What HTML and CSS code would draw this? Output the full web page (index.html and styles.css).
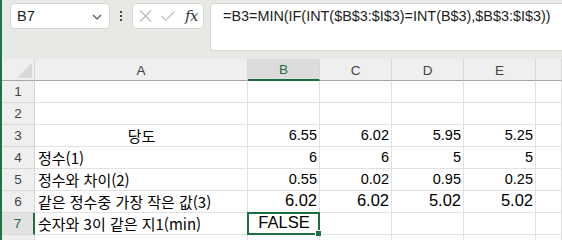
FILE: index.html
```html
<!DOCTYPE html>
<html lang="ko">
<head>
<meta charset="utf-8">
<link rel="stylesheet" href="styles.css">
</head>
<body>
<div class="app">
  <div class="topbar">
    <div class="namebox">
      <span class="name">B7</span>
      <svg class="chev" width="10" height="6" viewBox="0 0 10 6"><path d="M1 1 L5 5 L9 1" fill="none" stroke="#555" stroke-width="1.2"/></svg>
    </div>
    <div class="dots"><i></i><i></i><i></i></div>
    <div class="fxbox">
      <svg width="13" height="12" viewBox="0 0 13 12"><path d="M1 0.5 L12 11.5 M12 0.5 L1 11.5" stroke="#b8b8b8" stroke-width="1.1" fill="none"/></svg>
      <svg width="14" height="10" viewBox="0 0 14 10"><path d="M0.5 5 L4.8 9.3 L13.5 0.5" stroke="#b8b8b8" stroke-width="1.1" fill="none"/></svg>
      <span class="fx">fx</span>
    </div>
    <div class="formula">=B3=MIN(IF(INT($B$3:$I$3)=INT(B$3),$B$3:$I$3))</div>
  </div>
  <div class="sheet">
    <div class="hd corner"><span class="tri"></span></div>
    <div class="hd col">A</div>
    <div class="hd col sel">B</div>
    <div class="hd col">C</div>
    <div class="hd col">D</div>
    <div class="hd col">E</div>
    <div class="hd col last"></div>

    <div class="hd row">1</div>
    <div class="c"></div><div class="c"></div><div class="c"></div><div class="c"></div><div class="c"></div><div class="c"></div>

    <div class="hd row">2</div>
    <div class="c"></div><div class="c"></div><div class="c"></div><div class="c"></div><div class="c"></div><div class="c"></div>

    <div class="hd row">3</div>
    <div class="c ko center">당도</div><div class="c num">6.55</div><div class="c num">6.02</div><div class="c num">5.95</div><div class="c num">5.25</div><div class="c"></div>

    <div class="hd row">4</div>
    <div class="c ko">정수(1)</div><div class="c num">6</div><div class="c num">6</div><div class="c num">5</div><div class="c num">5</div><div class="c"></div>

    <div class="hd row">5</div>
    <div class="c ko">정수와 차이(2)</div><div class="c num">0.55</div><div class="c num">0.02</div><div class="c num">0.95</div><div class="c num">0.25</div><div class="c"></div>

    <div class="hd row">6</div>
    <div class="c ko">같은 정수중 가장 작은 값(3)</div><div class="c num big">6.02</div><div class="c num big">6.02</div><div class="c num big">5.02</div><div class="c num big">5.02</div><div class="c"></div>

    <div class="hd row selrow">7</div>
    <div class="c ko">숫자와 3이 같은 지1(min)</div><div class="c big center active">FALSE</div><div class="c"></div><div class="c"></div><div class="c"></div><div class="c"></div>

    <div class="hd row"></div>
    <div class="c"></div><div class="c"></div><div class="c"></div><div class="c"></div><div class="c"></div><div class="c"></div>
  </div>
</div>
</body>
</html>
```
FILE: styles.css
```css
* { box-sizing: border-box; }
html, body { margin: 0; padding: 0; }
body {
  width: 562px;
  height: 240px;
  overflow: hidden;
  background: #ffffff;
  font-family: "Liberation Sans", Arial, sans-serif;
}
.app {
  height: 240px;
  border-left: 2px solid #1f7244;
  display: flex;
  flex-direction: column;
  overflow: hidden;
}
.topbar {
  height: 59px;
  flex: none;
  background: #e6e9e4;
  display: flex;
  align-items: flex-start;
  padding: 3px 0 0 8px;
}
.namebox {
  width: 100px;
  height: 26px;
  background: #fff;
  border: 1px solid #d6d8d4;
  border-radius: 4px;
  display: flex;
  align-items: center;
  justify-content: space-between;
  padding: 0 7px 0 6px;
}
.name { font-size: 14.5px; color: #222; }
.chev { margin-top: 1px; }
.dots {
  width: 22px;
  height: 26px;
  display: flex;
  flex-direction: column;
  align-items: center;
  justify-content: center;
  gap: 2px;
}
.dots i { display: block; width: 2px; height: 2px; background: #444; }
.fxbox {
  width: 72px;
  height: 26px;
  background: #fff;
  border: 1px solid #d6d8d4;
  border-radius: 4px;
  display: flex;
  align-items: center;
  padding: 0 0 0 6px;
  gap: 9px;
}
.fx {
  font-family: "DejaVu Serif", "Liberation Serif", serif;
  font-style: italic;
  font-size: 15px;
  color: #333;
  margin-left: 1px;
  letter-spacing: -0.5px;
}
.formula {
  margin-left: 6px;
  flex: 1;
  height: 48px;
  background: #fff;
  border: 1px solid #d6d8d4;
  border-right: none;
  border-radius: 4px 0 0 4px;
  padding: 4px 0 0 12px;
  font-size: 14.4px;
  color: #222;
  white-space: nowrap;
}
.sheet {
  display: grid;
  grid-template-columns: 33px 213px 72px 72px 72px 72px 1fr;
  grid-auto-rows: 22px;
  font-size: 14.5px;
  color: #000;
}
.hd {
  background: #efefef;
  color: #444;
  font-size: 13.5px;
  display: flex;
  align-items: center;
  justify-content: center;
  border-right: 1px solid #d6d6d6;
  border-bottom: 1px solid #d6d6d6;
}
.col { border-bottom: 1px solid #a6a6a6; padding-top: 1px; }
.corner { border-bottom: 1px solid #a6a6a6; position: relative; }
.tri {
  position: absolute;
  right: 2px;
  bottom: 2px;
  width: 0;
  height: 0;
  border-left: 15px solid transparent;
  border-bottom: 15px solid #d8d8d8;
}
.col.sel {
  background: #dcdcdc;
  color: #1e6e42;
  border-bottom: 2px solid #1e6e42;
}
.row.selrow {
  background: #e2e2e2;
  color: #1e6e42;
  border-right: 2px solid #1e6e42;
}
.c {
  border-right: 1px solid #e1e1e1;
  border-bottom: 1px solid #e1e1e1;
  display: flex;
  align-items: flex-end;
  padding: 0 2px 2px 3px;
  white-space: nowrap;
  overflow: visible;
}
.ko {
  font-family: "Noto Sans CJK KR", "Liberation Sans", sans-serif;
  font-size: 15px;
  line-height: 19px;
  padding-bottom: 1px;
}
.center { justify-content: center; }
.num { justify-content: flex-end; line-height: 17px; }
.big { font-size: 16.5px; line-height: 19px; }
.active { position: relative; }
.active::after {
  content: "";
  position: absolute;
  left: -1px;
  top: -1px;
  right: -1px;
  bottom: -1px;
  border: 2px solid #1e6e42;
}
.active::before {
  content: "";
  position: absolute;
  right: -3px;
  bottom: -3px;
  width: 5px;
  height: 5px;
  background: #1e6e42;
  border: 1px solid #fff;
  z-index: 1;
}
```
